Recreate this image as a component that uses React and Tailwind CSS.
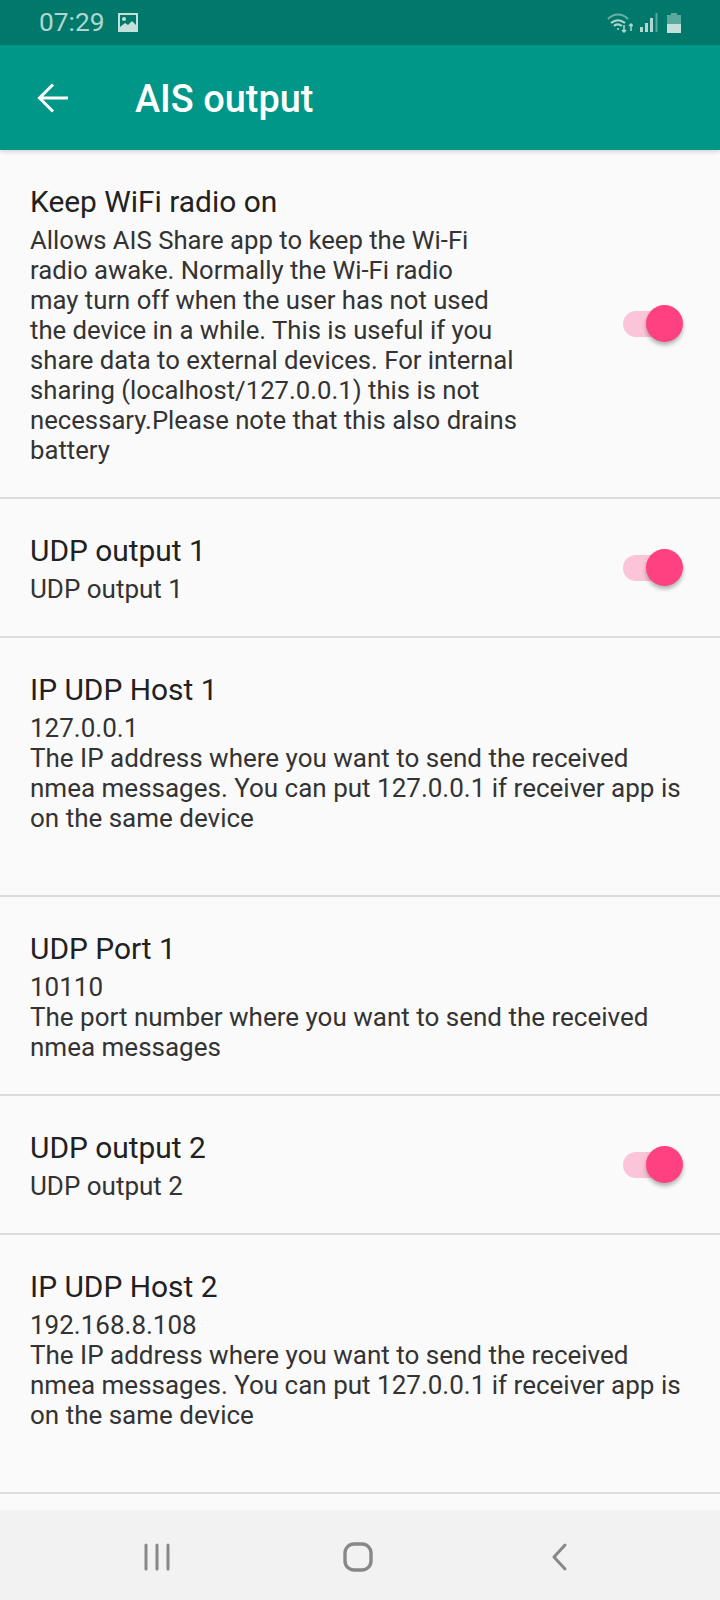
const font = { fontFamily: 'Roboto, sans-serif' };

function Toggle() {
  return (
    <div className="relative h-[26px] w-[60px] shrink-0">
      <div className="absolute left-0 top-0 h-[26px] w-[50px] rounded-full bg-[#fcc4d9]" />
      <div className="absolute right-0 top-[-6px] h-[37px] w-[37px] rounded-full bg-[#ff4081] shadow-[0_3px_4px_rgba(0,0,0,0.3)]" />
    </div>
  );
}

function Row({ title, lines, toggle, height, body = 'text-[26px]' }) {
  return (
    <div className={`flex items-center justify-between border-b-2 border-[#dcdcdc] pl-[30px] pr-[37px] ${height}`}>
      <div>
        <div className="mb-[3px] text-[29.900px] leading-[42px] text-[#212121]">{title}</div>
        {lines.map((l) => (
          <div key={l} className={`whitespace-nowrap leading-[29.900px] text-[#333333] ${body}`}>{l}</div>
        ))}
      </div>
      {toggle && <Toggle />}
    </div>
  );
}

export default function App() {
  return (
    <div className="flex h-[1600px] w-[720px] flex-col overflow-hidden bg-[#fafafa]" style={font}>
      <div className="flex h-[45px] items-center justify-between bg-[#00796b] pl-[39px] pr-[39px]">
        <div className="flex items-center gap-[13px]">
          <span className="text-[26.300px] text-[#b2d7d2]">07:29</span>
          <svg width="20" height="19" viewBox="0 0 20 19"><path fill="#c4e0dc" d="M0 0h20v19H0z" /><path fill="#00796b" d="M2 2h16v10l-4-4-4 4-3-2-5 4z" /><circle cx="6" cy="6" r="2" fill="#c4e0dc" /></svg>
        </div>
        <div className="flex items-center gap-[7px]">
          <svg width="26" height="20" viewBox="0 0 26 20" fill="none" stroke="#b2d7d2" strokeWidth="2">
            <path d="M1 6c6-6 14-6 20 0" opacity="0.6" /><path d="M4 10c5-4 9-4 14 0" /><path d="M7 13c2-2 5-2 8 0" />
            <circle cx="11" cy="16" r="1" fill="#b2d7d2" stroke="none" />
            <path d="M17 12v7M15 17l2 2 2-2M24 18v-7M22 13l2-2 2 2" strokeWidth="1.5" />
          </svg>
          <svg width="18" height="19" viewBox="0 0 18 19" fill="#b2d7d2"><path d="M0 14h3v5H0zM5 10h3v9H5zM10 5h3v14h-3z" /><path d="M15.500 0h2v19h-2z" opacity="0.5" /></svg>
          <svg className="ml-[2px]" width="14" height="20" viewBox="0 0 14 20"><path fill="#5ba99e" d="M4 0h6v2h4v9H0V2h4z" /><path fill="#c4e0dc" d="M0 11h14v9H0z" /></svg>
        </div>
      </div>
      <div className="flex h-[105px] shrink-0 items-center bg-[#009688] shadow-[0_2px_4px_rgba(0,0,0,0.15)]">
        <svg className="ml-[37px]" width="32" height="32" viewBox="0 0 32 32" fill="none" stroke="#ffffff" strokeWidth="3"><path d="M31 16H3M16 2.500 2.500 16 16 29.500" /></svg>
        <span className="ml-[66px] mt-[3px] text-[37.900px] font-medium text-white">AIS output</span>
      </div>
      <div className="flex-1 overflow-hidden">
        <Row height="h-[349px]" body="text-[25.700px]" toggle title="Keep WiFi radio on" lines={['Allows AIS Share app to keep the Wi-Fi', 'radio awake. Normally the Wi-Fi radio', 'may turn off when the user has not used', 'the device in a while. This is useful if you', 'share data to external devices. For internal', 'sharing (localhost/127.0.0.1) this is not', 'necessary.Please note that this also drains', 'battery']} />
        <Row height="h-[139px]" toggle title="UDP output 1" lines={['UDP output 1']} />
        <Row height="h-[259px]" title="IP UDP Host 1" lines={['127.0.0.1', 'The IP address where you want to send the received', 'nmea messages. You can put 127.0.0.1 if receiver app is', 'on the same device', '\u00a0']} />
        <Row height="h-[199px]" title="UDP Port 1" lines={['10110', 'The port number where you want to send the received', 'nmea messages']} />
        <Row height="h-[139px]" toggle title="UDP output 2" lines={['UDP output 2']} />
        <Row height="h-[259px]" title="IP UDP Host 2" lines={['192.168.8.108', 'The IP address where you want to send the received', 'nmea messages. You can put 127.0.0.1 if receiver app is', 'on the same device', '\u00a0']} />
      </div>
      <div className="flex h-[90px] shrink-0 items-center bg-[#f2f2f2] pl-[142px] pt-[4px]">
        <svg width="30" height="30" viewBox="0 0 30 30" stroke="#888888" strokeWidth="3" strokeLinecap="round"><path d="M4 3v24M15 3v24M26 3v24" /></svg>
        <svg className="ml-[170px]" width="32" height="32" viewBox="0 0 32 32" fill="none" stroke="#888888" strokeWidth="3.4"><rect x="3" y="3" width="26" height="26" rx="9" /></svg>
        <svg className="ml-[175px]" width="20" height="30" viewBox="0 0 20 30" fill="none" stroke="#888888" strokeWidth="3" strokeLinecap="round" strokeLinejoin="round"><path d="M16 3 5 15l11 12" /></svg>
      </div>
    </div>
  );
}
